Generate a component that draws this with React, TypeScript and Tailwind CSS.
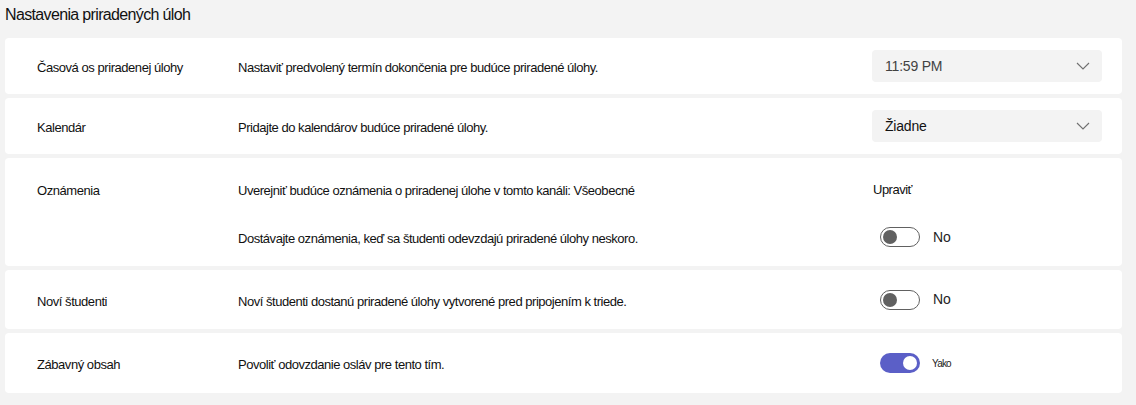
import React from "react";

const font = { fontFamily: '"Liberation Sans", Arial, sans-serif' };

function Chevron() {
  return (
    <svg width="14" height="8" viewBox="0 0 14 8" fill="none">
      <path d="M1 1l6 6 6-6" stroke="#707070" strokeWidth="1.1" />
    </svg>
  );
}

function Dropdown({ value, muted }: { value: string; muted?: boolean }) {
  return (
    <div className="flex h-8 w-[230px] items-center justify-between rounded-[4px] bg-[#f3f3f3] pl-[13px] pr-[12px]">
      <span className={`text-[14px] tracking-[-0.2px] ${muted ? "text-[#424242]" : "text-[#111]"}`}>{value}</span>
      <Chevron />
    </div>
  );
}

function Toggle({ on, label }: { on?: boolean; label: string }) {
  return (
    <div className="flex items-center pl-[8px]">
      {on ? (
        <div className="flex h-5 w-10 items-center justify-end rounded-full bg-[#5b5fc7] pr-[3px]">
          <div className="h-[14px] w-[14px] rounded-full bg-white" />
        </div>
      ) : (
        <div className="flex h-5 w-10 items-center rounded-full border border-[#616161] bg-white pl-[2px]">
          <div className="h-[14px] w-[14px] rounded-full bg-[#616161]" />
        </div>
      )}
      {on ? (
        <span className="ml-[12px] text-[10px] tracking-[-0.8px] text-[#222]">{label}</span>
      ) : (
        <span className="ml-[13px] text-[14px] text-[#242424]">{label}</span>
      )}
    </div>
  );
}

function Row({
  label,
  text,
  control,
  h,
}: {
  label?: string;
  text: string;
  control: React.ReactNode;
  h: string;
}) {
  return (
    <div className={`flex items-center ${h}`}>
      <div className="w-[201px] pt-[4px] text-[13px] tracking-[-0.45px] text-[#111]">{label}</div>
      <div className="flex-1 pt-[4px] text-[13px] tracking-[-0.47px] text-[#111]">{text}</div>
      <div className="w-[230px]">{control}</div>
    </div>
  );
}

export default function App() {
  return (
    <div className="min-h-[405px] w-full bg-[#f3f3f3] pl-[5px] pr-[14px]" style={font}>
      <div className="flex h-[38px] items-center pb-[8px] text-[16px] tracking-[-0.65px] text-[#111]">
        Nastavenia priradených úloh
      </div>
      <div className="flex flex-col gap-[4px]">
        <div className="rounded-[4px] bg-white pl-8 pr-5">
          <Row
            h="h-[56px]"
            label="Časová os priradenej úlohy"
            text="Nastaviť predvolený termín dokončenia pre budúce priradené úlohy."
            control={<Dropdown value="11:59 PM" muted />}
          />
        </div>
        <div className="rounded-[4px] bg-white pl-8 pr-5">
          <Row
            h="h-[56px]"
            label="Kalendár"
            text="Pridajte do kalendárov budúce priradené úlohy."
            control={<Dropdown value="Žiadne" />}
          />
        </div>
        <div className="rounded-[4px] bg-white pb-[5px] pl-8 pr-5 pt-[7px]">
          <Row
            h="h-[48px]"
            label="Oznámenia"
            text="Uverejniť budúce oznámenia o priradenej úlohe v tomto kanáli: Všeobecné"
            control={<span className="pl-[1px] text-[13px] tracking-[-0.5px] text-[#111]">Upraviť</span>}
          />
          <Row
            h="h-[48px]"
            text="Dostávajte oznámenia, keď sa študenti odevzdajú priradené úlohy neskoro."
            control={<Toggle label="No" />}
          />
        </div>
        <div className="rounded-[4px] bg-white pl-8 pr-5">
          <Row
            h="h-[59px]"
            label="Noví študenti"
            text="Noví študenti dostanú priradené úlohy vytvorené pred pripojením k triede."
            control={<Toggle label="No" />}
          />
        </div>
        <div className="rounded-[4px] bg-white pl-8 pr-5">
          <Row
            h="h-[60px]"
            label="Zábavný obsah"
            text="Povoliť odovzdanie osláv pre tento tím."
            control={<Toggle on label="Yako" />}
          />
        </div>
      </div>
    </div>
  );
}
